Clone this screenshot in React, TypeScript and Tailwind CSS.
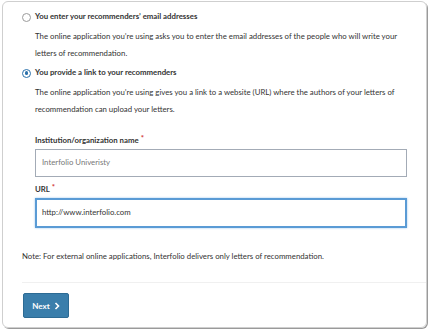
export default function App() {
  return (
    <div className="h-[330px] w-[429px] bg-white pl-[2px] pt-[1px]" style={{ fontFamily: "Lato, 'Liberation Sans', sans-serif" }}>
      <div className="h-[327px] w-[425px] rounded-[6px] border border-[#cfcfcf] text-[7.8px] text-[#333] shadow-[1px_1px_0_#9a9a9a]">
        <div className="pl-[19px] pr-[19px] pt-[7px]">
          <label className="flex h-[16px] items-center gap-[4px] font-bold">
            <span className="h-[9px] w-[9px] rounded-full border border-[#9b9b9b] bg-white" />
            <span>You enter your recommenders’ email addresses</span>
          </label>
          <p className="mt-[3px] pl-[13px] leading-[16.5px]">
            The online application you’re using asks you to enter the email addresses of the people who will write your letters of recommendation.
          </p>
          <label className="mt-[4px] flex h-[16px] items-center gap-[4px] font-bold">
            <span className="flex h-[9px] w-[9px] items-center justify-center rounded-full border-[1.5px] border-[#2b71ab] bg-white">
              <span className="h-[3.5px] w-[3.5px] rounded-full bg-[#2b71ab]" />
            </span>
            <span>You provide a link to your recommenders</span>
          </label>
          <p className="mt-[3px] pl-[13px] leading-[16.5px]">
            The online application you’re using gives you a link to a website (URL) where the authors of your letters of recommendation can upload your letters.
          </p>

          <div className="mt-[17px] pl-[13px]">
            <div className="mb-[1px] flex h-[14px] items-center font-bold">
              Institution/organization name<span className="ml-[2px] -mt-[4px] text-[#d0342c]">*</span>
            </div>
            <div className="flex h-[28px] items-center border border-[#a3abb6] px-[6px] text-[#777]">Interfolio Univeristy</div>
            <div className="mt-[6px] mb-[1px] flex h-[14px] items-center font-bold">
              URL<span className="ml-[2px] -mt-[4px] text-[#d0342c]">*</span>
            </div>
            <div className="flex h-[30px] items-center border-2 border-[#5a9bd5] px-[5px] shadow-[0_0_2px_#9cc6ee]">http://www.interfolio.com</div>
          </div>

          <p className="mt-[21px] flex h-[16px] items-center">
            Note: For external online applications, Interfolio delivers only letters of recommendation.
          </p>
        </div>
        <div className="ml-[19px] mt-[17px] border-t border-[#f0f0f0]" />
        <div className="pl-[20px] pt-[10px]">
          <button className="flex h-[25px] w-[46px] items-center justify-center gap-[4px] rounded-[2px] border border-[#2d6b94] bg-[#3a7eab] text-[8px] font-bold text-white">
            Next
            <svg width="6" height="8" viewBox="0 0 6 8" fill="none">
              <path d="M1.5 1 L4.5 4 L1.5 7" stroke="white" strokeWidth="1.6" />
            </svg>
          </button>
        </div>
      </div>
    </div>
  );
}
